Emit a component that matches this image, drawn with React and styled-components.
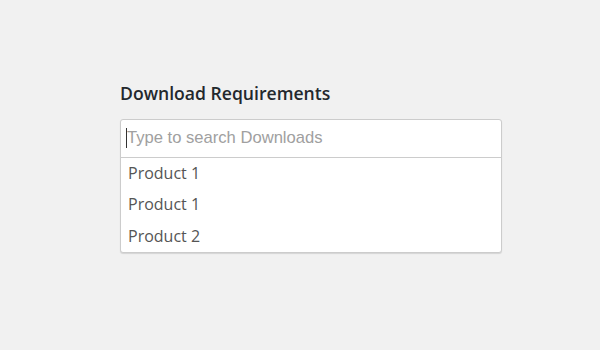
import React from 'react';
import styled, { createGlobalStyle } from 'styled-components';

const GlobalStyle = createGlobalStyle`
    html, body {
        margin: 0;
        padding: 0;
        background: #f1f1f1;
        font-family: "Open Sans", sans-serif;
    }
`;

const Page = styled.div`
    width: 600px;
    height: 350px;
    box-sizing: border-box;
    padding: 79px 0 0 120px;
`;

const Title = styled.h2`
    margin: 0 0 12px;
    font-size: 17.6px;
    font-weight: 600;
    line-height: 28px;
    color: #23282d;
`;

const Dropdown = styled.div`
    width: 380px;
    background: #fff;
    border: 1px solid #ccc;
    border-radius: 3px;
    box-shadow: 0 1px 1px rgba(0, 0, 0, 0.12);
`;

const SearchField = styled.div`
    position: relative;
    border-bottom: 1px solid #ccc;
`;

const SearchInput = styled.input`
    display: block;
    width: 100%;
    box-sizing: border-box;
    height: 36.5px;
    margin: 0;
    padding: 0 6px;
    border: none;
    background: transparent;
    font-family: "Liberation Sans", Arial, sans-serif;
    font-size: 16.6px;
    color: #333;
    outline: none;
    caret-color: transparent;
    &::placeholder {
        color: #a0a0a0;
    }
`;

const Caret = styled.span`
    position: absolute;
    left: 5px;
    top: 8px;
    width: 1px;
    height: 20px;
    background: #333;
    pointer-events: none;
`;

const Options = styled.ul`
    list-style: none;
    margin: 0;
    padding: 0;
`;

const Option = styled.li`
    height: 31.5px;
    line-height: 31.5px;
    padding: 0 7px;
    font-size: 16px;
    color: #555;
`;

const products = ['Product 1', 'Product 1', 'Product 2'];

export default function App() {
    return (
        <Page>
            <GlobalStyle />
            <Title>Download Requirements</Title>
            <Dropdown>
                <SearchField>
                    <SearchInput placeholder="Type to search Downloads" />
                    <Caret />
                </SearchField>
                <Options>
                    {products.map((p, i) => (
                        <Option key={i}>{p}</Option>
                    ))}
                </Options>
            </Dropdown>
        </Page>
    );
}
